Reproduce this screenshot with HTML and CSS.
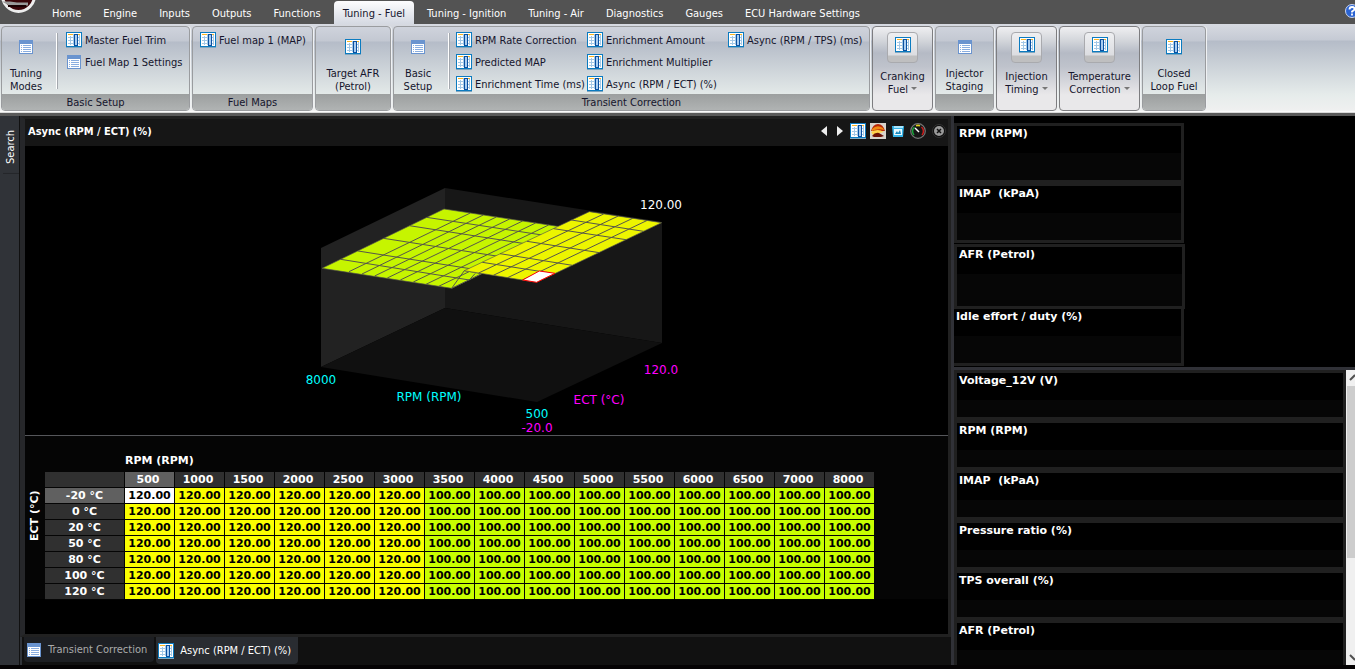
FILE: index.html
```html
<!DOCTYPE html>
<html lang="en">
<head>
<meta charset="utf-8">
<title>Async (RPM / ECT) (%)</title>
<link rel="stylesheet" href="styles.css">
</head>
<body>
<svg class="defs" aria-hidden="true">
  <symbol id="grid" viewBox="0 0 16 16">
    <rect x="0.5" y="0.5" width="15" height="14" fill="#fff" stroke="#0b7bc0"/>
    <path d="M2 2.500h5M12 2.500h2" stroke="#fbb51f"/>
    <path d="M2 5.500h12M2 8.500h12M2 11.500h12M4.500 4v9M7.500 2v11M13.500 3v10" stroke="#a3c8e6"/>
    <rect x="8.500" y="2.500" width="3" height="11" fill="#a9cdf0" stroke="#0a50a1"/>
    <path d="M0 15.500h16" stroke="#7fa6c0"/>
  </symbol>
  <symbol id="list" viewBox="0 0 16 16">
    <rect x="1" y="1" width="14" height="14" fill="#6a94cf"/>
    <rect x="2" y="5" width="12" height="9" fill="#fff"/>
    <path d="M3 6.500h1M3 8.500h1M3 10.500h1M3 12.500h1M5 6.500h8M5 8.500h8M5 10.500h8M5 12.500h8" stroke="#8aaee0"/>
  </symbol>
</svg>

<header class="menu">
  <svg class="logo" viewBox="0 0 41 14" aria-label="Application menu" role="img">
    <circle cx="18.500" cy="-4.500" r="16" fill="#3a0509" stroke="#eee" stroke-width="3"/>
    <path d="M2 1.500h8l7 1h11v3H9z" fill="#999"/>
    <path d="M8 6h18" stroke="#1a0002" stroke-width="2"/>
  </svg>
  <nav class="tabs">
    <button>Home</button><button>Engine</button><button>Inputs</button><button>Outputs</button><button>Functions</button><button class="active">Tuning - Fuel</button><button>Tuning - Ignition</button><button>Tuning - Air</button><button>Diagnostics</button><button>Gauges</button><button>ECU Hardware Settings</button>
  </nav>
  <button class="help" aria-label="Help"><svg viewBox="0 0 14 14"><circle cx="7" cy="7" r="6.500" fill="#2a63d2" stroke="#c9d6f0"/><path d="M4.500 5.500q0-2.500 2.500-2.500t2.500 2q0 1-2.500 2.500v1M7 9.500v2" fill="none" stroke="#fff" stroke-width="1.800"/></svg></button>
</header>

<section class="ribbon">
  <div class="group basic">
    <div class="body">
      <button class="large"><svg class="icon"><use href="#list"/></svg><span>Tuning<br>Modes</span></button>
      <div class="smalls">
        <button><svg class="icon"><use href="#grid"/></svg>Master Fuel Trim</button>
        <button><svg class="icon"><use href="#list"/></svg>Fuel Map 1 Settings</button>
      </div>
    </div>
    <div class="caption">Basic Setup</div>
  </div>
  <div class="group maps">
    <div class="body">
      <div class="smalls bare">
        <button><svg class="icon"><use href="#grid"/></svg>Fuel map 1 (MAP)</button>
      </div>
    </div>
    <div class="caption">Fuel Maps</div>
  </div>
  <div class="group target">
    <div class="body"><button class="large"><svg class="icon"><use href="#grid"/></svg><span>Target AFR<br>(Petrol)</span></button></div>
    <div class="caption"></div>
  </div>
  <div class="group transient">
    <div class="body">
      <button class="large"><svg class="icon"><use href="#list"/></svg><span>Basic<br>Setup</span></button>
      <div class="smalls">
        <button><svg class="icon"><use href="#grid"/></svg>RPM Rate Correction</button>
        <button><svg class="icon"><use href="#grid"/></svg>Predicted MAP</button>
        <button><svg class="icon"><use href="#grid"/></svg>Enrichment Time (ms)</button>
        <button><svg class="icon"><use href="#grid"/></svg>Enrichment Amount</button>
        <button><svg class="icon"><use href="#grid"/></svg>Enrichment Multiplier</button>
        <button><svg class="icon"><use href="#grid"/></svg>Async (RPM / ECT) (%)</button>
        <button><svg class="icon"><use href="#grid"/></svg>Async (RPM / TPS) (ms)</button>
      </div>
    </div>
    <div class="caption">Transient Correction</div>
  </div>
  <button class="group drop w60"><span class="frame"><svg class="icon"><use href="#grid"/></svg></span><span>Cranking<br>Fuel <i></i></span></button>
  <div class="group w58">
    <div class="body"><button class="large"><svg class="icon"><use href="#list"/></svg><span>Injector<br>Staging</span></button></div>
    <div class="caption"></div>
  </div>
  <button class="group drop w60"><span class="frame"><svg class="icon"><use href="#grid"/></svg></span><span>Injection<br>Timing <i></i></span></button>
  <button class="group drop w80"><span class="frame"><svg class="icon"><use href="#grid"/></svg></span><span>Temperature<br>Correction <i></i></span></button>
  <div class="group w63">
    <div class="body"><button class="large"><svg class="icon"><use href="#grid"/></svg><span>Closed<br>Loop Fuel</span></button></div>
    <div class="caption"></div>
  </div>
</section>

<div class="workspace">
  <aside class="rail"><button>Search</button></aside>

  <main class="document">
    <div class="panel">
      <div class="title">
        <h1>Async (RPM / ECT) (%)</h1>
        <div class="tools">
          <button aria-label="Previous"><svg viewBox="0 0 16 16"><path d="M11 3v10L5 8z" fill="#eee"/></svg></button>
          <button aria-label="Next"><svg viewBox="0 0 16 16"><path d="M5 3v10l6-5z" fill="#eee"/></svg></button>
          <button class="wide" aria-label="Table"><svg><use href="#grid"/></svg></button>
          <button class="wide" aria-label="Surface"><svg viewBox="0 0 16 16"><rect width="16" height="16" fill="#d8d4cc"/><path d="M1 8Q3 1 8 1t7 7z" fill="#b72607"/><path d="M2 6q5-5 11-1l1 2q-6-2-12 1z" fill="#f08a12"/><path d="M1 9q7-4 13 0l-5 1-6 2z" fill="#ffd24a"/><path d="M2 13q3-4 7-3l5 3-3 1H4z" fill="#6e1004"/></svg></button>
          <button class="wide" aria-label="Pictures"><svg viewBox="0 0 16 16"><path d="M2 3h12l-1 11H3z" fill="#37b4e8"/><path d="M4 3h9v2H4z" fill="#a9e4fb"/><rect x="4" y="6" width="8" height="6" fill="#e8faff"/><path d="M5 11l2-3 1 2 2-3 1 4z" fill="#1687bd"/></svg></button>
          <button class="wide" aria-label="Gauge"><svg viewBox="0 0 16 16"><circle cx="8" cy="8" r="7.300" fill="#161616" stroke="#777" stroke-width="1.200"/><path d="M4 12A5.500 5.500 0 0 1 4.500 4" fill="none" stroke="#19a33a" stroke-width="1.600"/><path d="M6 2.800A5.500 5.500 0 0 1 10 2.800" fill="none" stroke="#e0cf1b" stroke-width="1.600"/><path d="M11.500 4A5.500 5.500 0 0 1 12 12" fill="none" stroke="#c91d1d" stroke-width="1.600"/><path d="M5 5l4 4" stroke="#fff" stroke-width="1.500"/></svg></button>
          <button class="wide" aria-label="Close"><svg viewBox="0 0 16 16"><circle cx="9" cy="8" r="6.500" fill="#0d0d0d" stroke="#333"/><circle cx="9" cy="8" r="5" fill="#999"/><path d="M7 6l4 4M11 6l-4 4" stroke="#111" stroke-width="1.500"/></svg></button>
        </div>
      </div>

      <svg class="surface" viewBox="25 146 923 289" role="img" aria-label="Fuel surface">
        <path d="M321 248L445 188V308L321 367z" fill="#222"/>
        <path d="M445 188L662 222V343L445 308z" fill="#171717"/>
        <path d="M321 367L445 308L662 343L537 402z" fill="#101010"/>
        <g transform="translate(300 180) scale(0.3333)" stroke="#55554a" stroke-width="3">
          <path d="M66 265L432 87L825 147L545 281L455 325z" fill="#c6f500" stroke-width="2"/>
          <path d="M455 325L493 272L545 281z" fill="#c6f500"/>
          <path fill="none" d="M416 319L786 141M378 313L746 135M340 306L707 129M301 300L668 123M262 294L629 117M224 288L589 111M186 282L550 105M147 275L511 99M122 238L508 300M174 213L561 274M251 175L640 236M328 137L719 198M380 112L772 172M508 300L526 280"/>
          <path d="M493 272L868 95L1085 128L710 307z" fill="#edf500" stroke-width="2"/>
          <path fill="none" d="M667 300L1042 121M623 293L998 115M580 286L955 108M536 279L911 102M547 247L764 281M600 221L817 256M681 184L898 218M761 146L978 179M814 120L1031 154"/>
          <path d="M668 300L718 273L765 280L710 307z" fill="#fff" stroke="#f00"/>
        </g>
        <g class="labels">
          <text x="661" y="209" fill="#fff">120.00</text>
          <text x="321" y="384" fill="#0ff">8000</text>
          <text x="429" y="401" fill="#0ff">RPM (RPM)</text>
          <text x="537" y="418" fill="#0ff">500</text>
          <text x="537" y="432" fill="#f0f">-20.0</text>
          <text x="599" y="404" fill="#f0f">ECT (°C)</text>
          <text x="661" y="374" fill="#f0f">120.0</text>
        </g>
      </svg>

      <div class="data">
        <div class="y-axis">ECT (°C)</div>
        <div>
          <div class="x-axis">RPM (RPM)</div>
          <table class="map"><thead></thead><tbody></tbody></table>
        </div>
      </div>
    </div>
    <nav class="doc-tabs">
      <button><svg class="icon"><use href="#list"/></svg>Transient Correction</button>
      <button class="active"><svg class="icon"><use href="#grid"/></svg>Async (RPM / ECT) (%)</button>
    </nav>
  </main>

  <aside class="gauges">
    <div class="pinned">
      <div class="gauge">RPM (RPM)</div>
      <div class="gauge">IMAP&nbsp; (kPaA)</div>
      <div class="gauge tall">AFR (Petrol)</div>
      <div class="gauge open">Idle effort / duty (%)</div>
    </div>
    <div class="lower">
      <div class="stack">
        <div class="gauge">Voltage_12V (V)</div>
        <div class="gauge">RPM (RPM)</div>
        <div class="gauge">IMAP&nbsp; (kPaA)</div>
        <div class="gauge">Pressure ratio (%)</div>
        <div class="gauge">TPS overall (%)</div>
        <div class="gauge">AFR (Petrol)</div>
      </div>
      <div class="scroll">
        <svg viewBox="0 0 9 16"><path d="M4 10l5-5" stroke="#505050" stroke-width="2"/></svg>
        <div class="thumb"></div>
        <svg viewBox="0 0 9 16"><path d="M4 6l5 5" stroke="#505050" stroke-width="2"/></svg>
      </div>
    </div>
  </aside>
</div>
<script src="table.js"></script>
</body>
</html>
```
FILE: styles.css
```css
* { box-sizing: border-box; }
body {
  margin: 0;
  height: 100vh;
  display: flex;
  flex-direction: column;
  overflow: hidden;
  background: #050304;
  color: #fff;
  font: 11px/13px "DejaVu Sans Condensed", "DejaVu Sans", sans-serif;
}
button {
  margin: 0;
  padding: 0;
  border: 0;
  background: none;
  color: inherit;
  font: inherit;
  white-space: nowrap;
}
svg { display: block; }
.defs { position: absolute; width: 0; height: 0; }
.icon { width: 16px; height: 16px; flex: none; }

.menu { display: flex; height: 24px; flex: none; background: #535353; overflow: hidden; }
.logo { width: 41px; height: 14px; flex: none; }
.tabs { display: flex; flex: 1; align-items: flex-end; }
.tabs button { height: 23px; padding: 2px 11px 0; }
.tabs .active {
  padding: 2px 9px 0;
  margin: 0 2px;
  border-radius: 4px 4px 0 0;
  background: linear-gradient(#fdfdfe, #d5d9e2);
  color: #15152c;
}
.help { width: 10px; padding-top: 4px; overflow: hidden; display: flex; align-items: flex-start; }
.help svg { width: 14px; height: 14px; flex: none; }

.ribbon {
  display: flex;
  flex: none;
  gap: 2px;
  height: 92px;
  padding: 2px 1px 2px;
  border-bottom: 3px solid #5a5a5a;
  background: linear-gradient(#d7dae1 0, #c5cad4 16px, #b5bcc8 17px, #e6eceb 71px, #eff0f0 86px, #fff 88px, #b5b5b5 89px);
  color: #15152c;
}
.group {
  display: flex;
  flex-direction: column;
  flex: none;
  border: 1px solid #9a9c9f;
  border-radius: 4px;
  overflow: hidden;
  background: linear-gradient(#cfd3dc 0, #c3c8d2 14px, #b5bcc8 15px, #e4eae9 68px);
  box-shadow: 1px 0 0 #eff1f3;
}
.basic { width: 189px; }
.maps { width: 121px; }
.target { width: 76px; }
.transient { width: 477px; }
.w58 { width: 59px; }
.w60 { width: 61px; }
.w63 { width: 64px; }
.w80 { width: 81px; }
.body { display: flex; flex: 1; min-height: 0; }
.caption {
  flex: none;
  height: 16px;
  padding-top: 2px;
  background: linear-gradient(#9c9f9f, #b0b3b3);
  text-align: center;
}
.large { display: flex; flex-direction: column; align-items: center; gap: 12px; padding-top: 12px; flex: 1; }
.large:not(:only-child) { flex: none; width: 48px; }
.smalls {
  display: grid;
  grid-template-rows: repeat(3, 16px);
  grid-auto-flow: column;
  grid-auto-columns: max-content;
  gap: 6px 0;
  margin: 6px 0 0 6px;
  padding: 0 0 0 10px;
  height: 56px;
  box-shadow: inset 1px 0 0 #fff, inset 2px 0 0 #a4a8ae;
  align-content: start;
}
.smalls.bare { margin-left: 0; padding-left: 7px; box-shadow: none; }
.transient .smalls { padding-left: 8px; grid-template-columns: 131px 141px auto; }
.smalls button { display: flex; align-items: center; gap: 3px; height: 16px; margin-top: -1px; }
.drop {
  align-items: center;
  gap: 7px;
  padding-top: 5px;
  border-color: #7d7d80;
  background: linear-gradient(#efeff1 0, #d2d5da 14px, #b5bac5 26px, #bfc3cc 40px, #e9e8ea 68px);
}
.frame {
  display: flex;
  justify-content: center;
  width: 31px;
  height: 31px;
  padding-top: 4px;
  border: 1px solid #a9aaae;
  border-radius: 4px;
  background: linear-gradient(#eeeff1 0, #dcdde1 22px, #bfbfc0 23px);
}
.drop i {
  display: inline-block;
  border: 3px solid transparent;
  border-top-color: #777;
  border-bottom: 0;
  vertical-align: 3px;
}

.workspace { display: flex; flex: 1; min-height: 0; margin-bottom: 4px; }
.rail { width: 20px; flex: none; background: #303338; border-right: 1px solid #111; }
.rail button { writing-mode: vertical-rl; transform: rotate(180deg); width: 16px; padding: 9px 0 14px; margin-left: 3px; border-top: 1px solid #25272b; line-height: 16px; }
.document { flex: 1; min-width: 0; display: flex; flex-direction: column; border-right: 3px solid #303137; background: #111; }
.panel { flex: 1; min-height: 0; display: flex; flex-direction: column; border: 3px solid #212121; border-left: 5px solid #26272a; background: #000; }
.title { display: flex; justify-content: space-between; align-items: flex-start; height: 27px; flex: none; padding: 4px 0 0 3px; background: #161616; }
h1 { margin: 2px 0; font: bold 11px/13px "DejaVu Sans Condensed", "DejaVu Sans", sans-serif; }
.tools { display: flex; }
.tools button { width: 16px; height: 16px; }
.tools .wide { width: 20px; padding: 0 2px; }
.tools svg { width: 16px; height: 16px; }
.surface { width: 100%; height: 289px; flex: none; }
.labels { font: 12px "DejaVu Sans", sans-serif; text-anchor: middle; }
.data { display: flex; flex: 1; padding-top: 18px; border-top: 1px solid #55565a; background: linear-gradient(#050505 163px, #000 163px); font: bold 11px/15px "DejaVu Sans", sans-serif; }
.y-axis { writing-mode: vertical-rl; transform: rotate(180deg); width: 20px; height: 123px; line-height: 20px; text-align: center; }
.x-axis { padding-left: 80px; height: 18px; line-height: 13px; }
.map { border-collapse: separate; border-spacing: 0; table-layout: fixed; width: 830px; }
.map th, .map td { height: 16px; padding: 0; border: solid #050505; border-width: 0 1px 1px 0; text-align: center; line-height: 15px; }
.map th { background: #303030; font-weight: bold; }
.map th:first-child { width: 80px; }
.map thead th { padding-right: 3px; }
.map th.current { background: #606060; }
.map td { width: 50px; color: #000; }
.map .low { background: #c8ff00; }
.map .high { background: #fbff00; }
.map .selected { background: #fff; }

.doc-tabs { display: flex; align-items: flex-start; gap: 2px; height: 28px; padding: 0 0 0 2px; border-left: 2px solid #303338; }
.doc-tabs button { display: flex; align-items: center; gap: 6px; height: 25px; padding: 0 7px 0 2px; border-radius: 0 0 4px 4px; background: #1d1f23; color: #aaa; }
.doc-tabs .active { height: 27px; background: #292c31; color: #fff; }

.gauges { width: 401px; flex: none; display: flex; flex-direction: column; background: #000; font: bold 11px/13px "DejaVu Sans", sans-serif; }
.pinned { height: 251px; flex: none; padding-top: 7px; }
.gauge { border: 3px solid #202020; padding: 1px 2px; background: linear-gradient(#000 27px, #060606 27px); }
.pinned .gauge { width: 230px; height: 60px; }
.pinned .tall { width: 231px; height: 65px; margin-top: 1px; }
.pinned .open { border-top: 0; border-left: 0; height: 57px; }
.lower { display: flex; flex: 1; min-height: 0; border-top: 3px solid #303137; }
.stack { flex: 1; overflow: hidden; }
.stack .gauge { height: 50px; }
.scroll { width: 9px; display: flex; flex-direction: column; background: #f0f0f0; }
.scroll svg { width: 9px; height: 16px; flex: none; }
.thumb { flex: none; height: 172px; margin-left: 1px; background: #cdcdcd; }
.scroll svg:last-child { margin-top: auto; }
```
FILE: table.js
```javascript
const rpm = [500, 1000, 1500, 2000, 2500, 3000, 3500, 4000, 4500, 5000, 5500, 6000, 6500, 7000, 8000];
const ect = [-20, 0, 20, 50, 80, 100, 120];

document.querySelector(".map thead").innerHTML =
  "<tr><th></th>" + rpm.map((r, i) => `<th class="${i ? "" : "current"}" scope="col">${r}</th>`).join("") + "</tr>";

document.querySelector(".map tbody").innerHTML = ect.map((t, row) =>
  `<tr><th class="${row ? "" : "current"}" scope="row">${t} °C</th>` +
  rpm.map((r, col) => {
    const high = r <= 3000;
    const kind = row + col === 0 ? "selected" : high ? "high" : "low";
    return `<td class="${kind}">${high ? "120.00" : "100.00"}</td>`;
  }).join("") + "</tr>").join("");
```
